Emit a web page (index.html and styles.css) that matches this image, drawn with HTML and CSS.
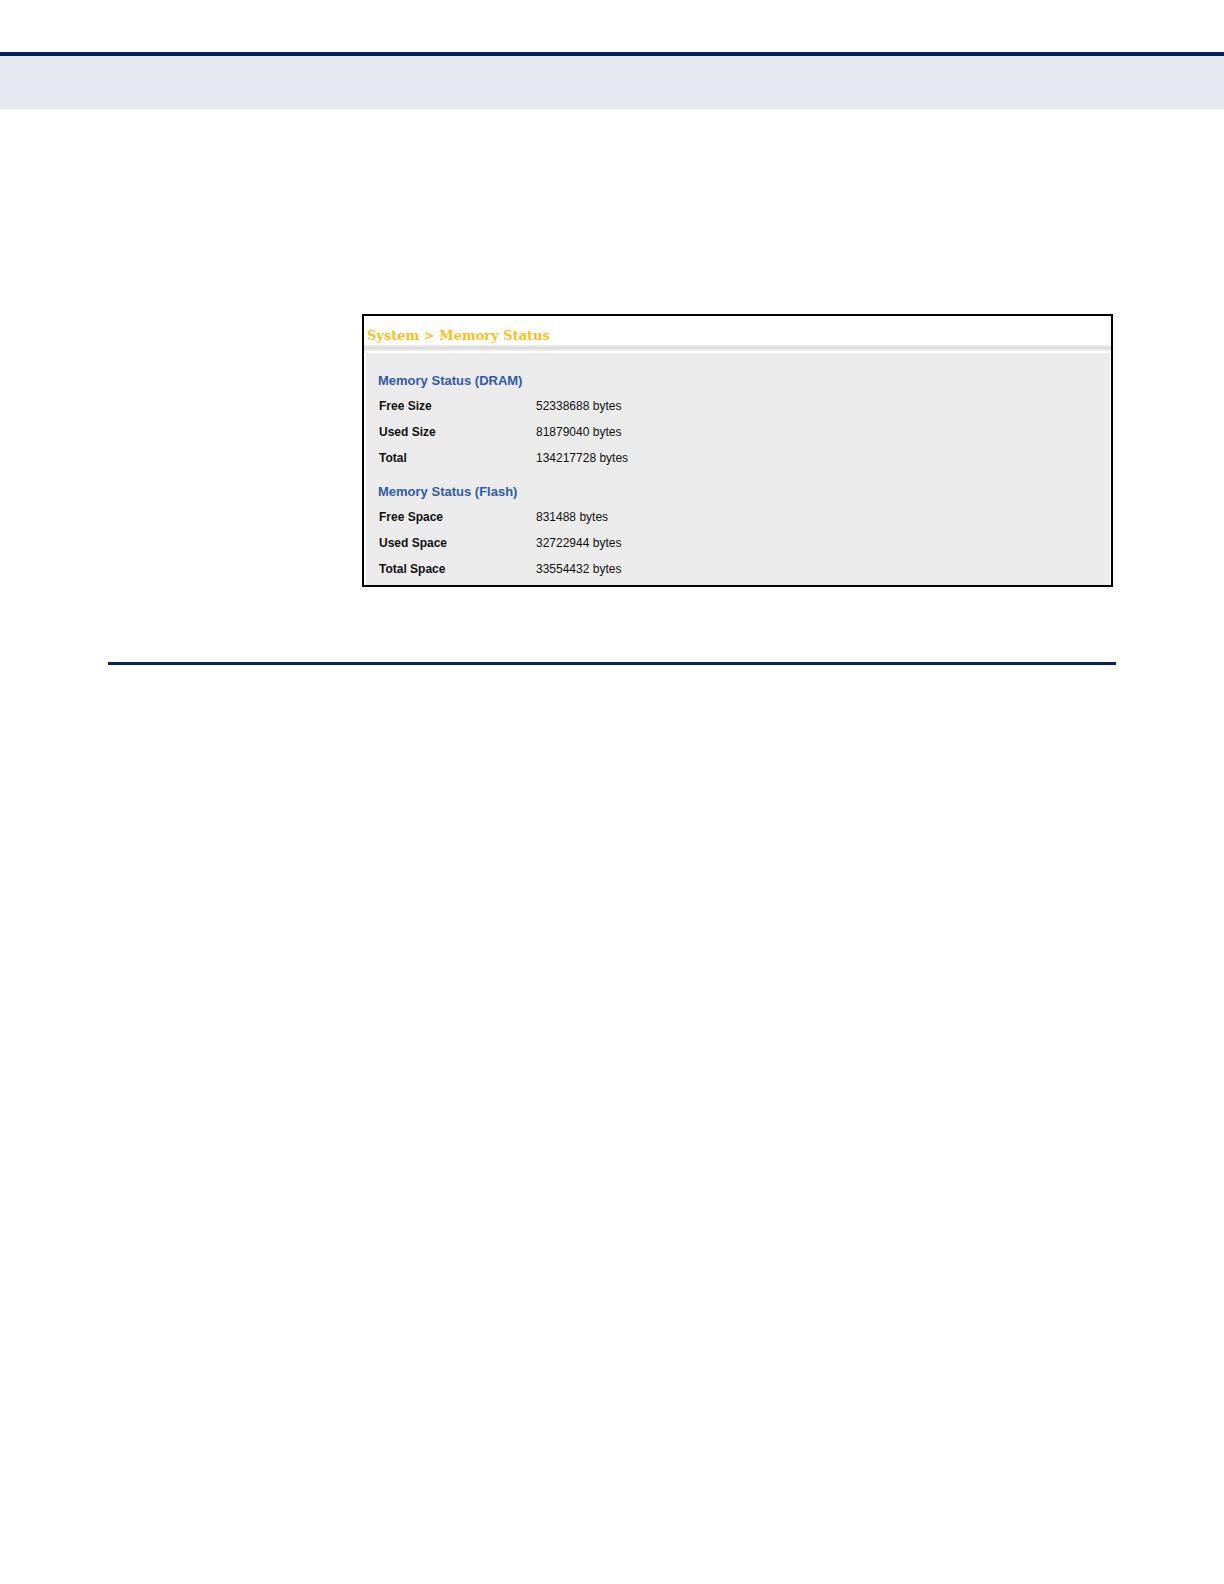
FILE: index.html
```html
<!DOCTYPE html>
<html lang="en">
<head>
    <meta charset="UTF-8">
    <meta name="viewport" content="width=device-width, initial-scale=1.0">
    <title>Memory Status</title>
    <link rel="stylesheet" href="styles.css">
</head>
<body>

<header class="page-header"></header>

<main class="content">
    <section class="panel">
        <h1>System &gt; Memory Status</h1>
        <div class="panel-body">
            <table>
                <caption>Memory Status (DRAM)</caption>
                <tr><th scope="row">Free Size</th><td>52338688 bytes</td></tr>
                <tr><th scope="row">Used Size</th><td>81879040 bytes</td></tr>
                <tr><th scope="row">Total</th><td>134217728 bytes</td></tr>
            </table>

            <table>
                <caption>Memory Status (Flash)</caption>
                <tr><th scope="row">Free Space</th><td>831488 bytes</td></tr>
                <tr><th scope="row">Used Space</th><td>32722944 bytes</td></tr>
                <tr><th scope="row">Total Space</th><td>33554432 bytes</td></tr>
            </table>
        </div>
    </section>

    <hr>
</main>

</body>
</html>
```

FILE: styles.css
```css
body {
    margin: 0;
    background: #fff;
    color: #111;
    font-family: "Liberation Sans", Arial, sans-serif;
    font-size: 12px;
}

/* Band across the top of the page */
.page-header {
    height: 53px;
    margin-top: 52px;
    border-top: 4px solid #05245f;
    background: #e5e8ee;
}

.content {
    padding: 205px 108px 0;
}

/* Bordered status panel */
.panel {
    margin: 0 3px 0 254px;
    border: 2px solid #000;
    background: #fff;
}

.panel h1 {
    margin: 0;
    padding: 11px 3px 0;
    color: #fbbf1c;
    font-family: "Bookman Old Style", "DejaVu Serif", serif;
    font-size: 13px;
    line-height: 18px;
}

/* Soft grey shadow line under the title */
.panel h1::after {
    content: "";
    display: block;
    height: 6px;
    margin: 0 -3px;
    background: linear-gradient(#eee, #d9d9d9 50%, #f4f4f4);
}

.panel-body {
    display: flex;
    flex-direction: column;
    gap: 9px;
    margin: 2px 1px 0 2px;
    padding: 16px 12px 3px;
    background: #ebebeb;
}

table {
    width: 100%;
    border-collapse: collapse;
    table-layout: fixed;
}

caption {
    color: #2f5ca8;
    font-size: 13px;
    font-weight: bold;
    line-height: 24px;
    text-align: left;
}

th, td {
    height: 26px;
    padding: 0;
    text-align: left;
}

th {
    width: 157px;
    padding-left: 1px;
}

/* Line that closes the section */
hr {
    height: 3px;
    margin: 75px 0 0;
    border: none;
    background: #05245f;
}
```
